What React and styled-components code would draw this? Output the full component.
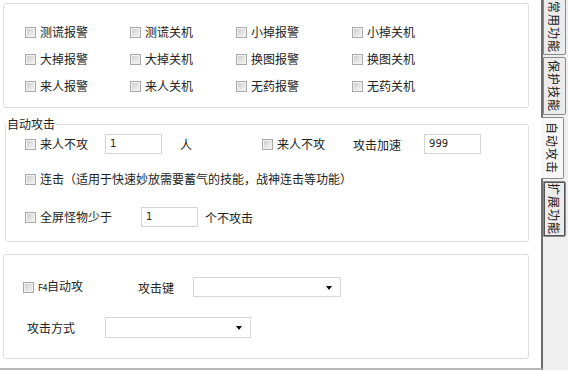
import React from "react";
import styled, { createGlobalStyle } from "styled-components";

const GlobalStyle = createGlobalStyle`
  html, body {
    margin: 0;
    padding: 0;
    background: #fff;
  }
  body {
    font-family: "Noto Sans CJK SC", "Liberation Sans", sans-serif;
    font-size: 12px;
    color: #222;
  }
`;

const Frame = styled.div`
  display: flex;
  width: 568px;
  height: 370px;
  overflow: hidden;
`;

const Main = styled.div`
  box-sizing: border-box;
  width: 543px;
  height: 370px;
  padding: 3px 12px 0 3px;
  background: #fff;
  border-right: 2px solid #6e6e6e;
  border-bottom: 2px solid #b8b8b8;
  display: flex;
  flex-direction: column;
`;

const Side = styled.div`
  flex: 1;
  background: #efefef;
  display: flex;
  flex-direction: column;
  gap: 2px;
`;

const Tab = styled.div`
  box-sizing: border-box;
  height: ${p => p.h}px;
  margin-top: ${p => p.mt || 0}px;
  width: 23px;
  margin-left: ${p => (p.active ? -2 : 0)}px;
  background: ${p => (p.active ? "#f7f7f7" : "#ececec")};
  border: 1px solid #8a8a8a;
  border-left: ${p => (p.active ? "none" : "1px solid #8a8a8a")};
  box-shadow: ${p => (p.focus ? "inset 0 0 0 1px #555" : "none")};
  border-radius: 0 2px 2px 0;
  display: flex;
  align-items: center;
  justify-content: center;
  writing-mode: vertical-rl;
  text-orientation: sideways;
  font-size: 12px;
  letter-spacing: 1px;
  color: #222;
`;

const Group = styled.div`
  box-sizing: border-box;
  border: 1px solid #dedede;
  border-radius: 3px;
  height: 105px;
  margin-top: ${p => p.mt || 0}px;
  padding: ${p => p.pad};
  display: flex;
  flex-direction: column;
`;

const Fieldset = styled.fieldset`
  box-sizing: border-box;
  margin: 9px 0 0 2px;
  padding: 0 0 14px 0;
  border: 1px solid #dedede;
  border-radius: 3px;
  min-width: 0;
`;

const Legend = styled.legend`
  padding: 0;
  margin-left: 1px;
  line-height: 14px;
  font-size: 12px;
`;

const Grid = styled.div`
  display: grid;
  grid-template-columns: 105px 106px 116px 1fr;
  row-gap: 15px;
  padding-left: 21px;
`;

const Row = styled.div`
  display: flex;
  align-items: center;
  height: 20px;
  margin-top: ${p => p.mt || 0}px;
  padding-left: ${p => p.pl ?? 19}px;
`;

const Check = styled.label`
  display: flex;
  align-items: center;
  gap: 4px;
  height: 12px;
  line-height: 12px;
  white-space: nowrap;
  width: ${p => (p.w ? p.w + "px" : "auto")};
  margin-left: ${p => p.ml || 0}px;
`;

const Box = styled.span`
  box-sizing: border-box;
  flex: none;
  width: 11px;
  height: 11px;
  border: 1px solid #a9a9a9;
  background: linear-gradient(135deg, #c9c9c9 0%, #e4e4e4 55%, #f4f4f4 100%);
  box-shadow: inset 0 0 0 1px #f2f2f2;
`;

const Text = styled.span`
  white-space: nowrap;
  margin-left: ${p => p.ml || 0}px;
  width: ${p => (p.w ? p.w + "px" : "auto")};
`;

const Small = styled.span`
  font-size: 9px;
  letter-spacing: -0.5px;
`;

const Input = styled.div`
  box-sizing: border-box;
  flex: none;
  width: ${p => p.w}px;
  height: 20px;
  margin-left: ${p => p.ml || 0}px;
  border: 1px solid #d4d4d4;
  background: #fff;
  font-size: 10px;
  line-height: 18px;
  padding-left: 4px;
  font-family: "DejaVu Sans", sans-serif;
`;

const Select = styled.div`
  box-sizing: border-box;
  flex: none;
  width: ${p => p.w}px;
  height: ${p => p.h || 20}px;
  margin-left: ${p => p.ml || 0}px;
  border: 1px solid #d8d8d8;
  background: #fff;
  display: flex;
  align-items: center;
  justify-content: flex-end;
  padding-right: 8px;
`;

const Arrow = styled.span`
  width: 0;
  height: 0;
  border-left: 3.5px solid transparent;
  border-right: 3.5px solid transparent;
  border-top: 4px solid #111;
  margin-top: 2px;
`;

const CB = ({ children, w, ml }) => (
  <Check w={w} ml={ml}>
    <Box />
    <span>{children}</span>
  </Check>
);

const alarms = [
  "测谎报警", "测谎关机", "小掉报警", "小掉关机",
  "大掉报警", "大掉关机", "换图报警", "换图关机",
  "来人报警", "来人关机", "无药报警", "无药关机",
];

export default function App() {
  return (
    <>
      <GlobalStyle />
      <Frame>
        <Main>
          <Group pad="22px 0 0 0">
            <Grid>
              {alarms.map(a => (
                <CB key={a}>{a}</CB>
              ))}
            </Grid>
          </Group>

          <Fieldset>
            <Legend>自动攻击</Legend>
            <Row mt={3}>
              <CB w={80}>来人不攻</CB>
              <Input w={57}>1</Input>
              <Text ml={18}>人</Text>
              <CB ml={70}>来人不攻</CB>
              <Text ml={28}>攻击加速</Text>
              <Input w={57} ml={23}>999</Input>
            </Row>
            <Row mt={15}>
              <CB>连击（适用于快速妙放需要蓄气的技能，战神连击等功能）</CB>
            </Row>
            <Row mt={18}>
              <CB w={116}>全屏怪物少于</CB>
              <Input w={57}>1</Input>
              <Text ml={7}>个不攻击</Text>
            </Row>
          </Fieldset>

          <Group mt={12} pad="22px 0 0 0">
            <Row>
              <CB w={115}>
                <Small>F4</Small>自动攻
              </CB>
              <Text w={55}>攻击键</Text>
              <Select w={148}>
                <Arrow />
              </Select>
            </Row>
            <Row mt={20} pl={23}>
              <Text w={78}>攻击方式</Text>
              <Select w={146} h={21}>
                <Arrow />
              </Select>
            </Row>
          </Group>
        </Main>
        <Side>
          <Tab h={56} mt={-1}>常用功能</Tab>
          <Tab h={58}>保护技能</Tab>
          <Tab h={62} active>自动攻击</Tab>
          <Tab h={56} focus>扩展功能</Tab>
        </Side>
      </Frame>
    </>
  );
}
